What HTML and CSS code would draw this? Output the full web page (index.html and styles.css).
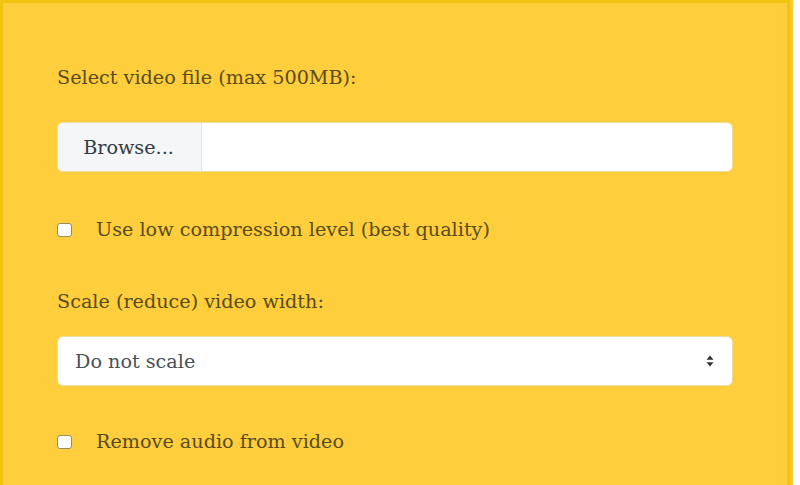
FILE: index.html
```html
<!DOCTYPE html>
<html>
<head>
<meta charset="utf-8">
<link rel="stylesheet" href="styles.css">
</head>
<body>
<div class="panel">
  <form class="form">
    <div class="field-label first">Select video file (max 500MB):</div>
    <label class="file-input">
      <span class="file-btn">Browse...</span>
      <span class="file-name"></span>
    </label>
    <label class="check-row first-check">
      <input type="checkbox" class="check">
      <span>Use low compression level (best quality)</span>
    </label>
    <div class="field-label second">Scale (reduce) video width:</div>
    <div class="select-wrap">
      <select class="select">
        <option>Do not scale</option>
      </select>
      <svg class="select-arrow" width="8" height="12" viewBox="0 0 8 12"><path d="M4 0.5 L7.5 4.8 H0.5 Z M4 11.5 L7.5 7.2 H0.5 Z" fill="#333"/></svg>
    </div>
    <label class="check-row second-check">
      <input type="checkbox" class="check">
      <span>Remove audio from video</span>
    </label>
  </form>
</div>
</body>
</html>
```

FILE: styles.css
```css
html, body {
  margin: 0;
  padding: 0;
  background: #ffffff;
  height: 100%;
  overflow: hidden;
}
.panel {
  width: 784px;
  height: 482px;
  overflow: hidden;
  background: #ffce3d;
  border: 3px solid #f2c40f;
  border-bottom: none;
  box-shadow: 3px 0 0 #f6cb2c;
  font-family: "DejaVu Serif", "Liberation Serif", serif;
  font-size: 19.2px;
  color: #5a4c1e;
}
.form {
  padding: 63px 54px 0 54px;
  display: flex;
  flex-direction: column;
}
.field-label {
  line-height: 24px;
  height: 24px;
  white-space: nowrap;
}
.field-label.first { margin-bottom: 32px; }
.field-label.second { margin-top: 48px; margin-bottom: 22px; }
.file-input {
  display: flex;
  height: 50px;
  box-sizing: border-box;
  border: 1px solid #ecdca0;
  border-radius: 6px;
  background: #ffffff;
  overflow: hidden;
}
.file-btn {
  width: 144px;
  box-sizing: border-box;
  background: #f5f6f8;
  border-right: 1px solid #dfe2e6;
  color: #343a40;
  display: flex;
  align-items: center;
  justify-content: center;
  padding-right: 2px;
}
.file-name { flex: 1; }
.check-row {
  display: flex;
  align-items: center;
  height: 24px;
  line-height: 24px;
  white-space: nowrap;
}
.first-check { margin-top: 46px; }
.second-check { margin-top: 44px; }
.check {
  appearance: none;
  -webkit-appearance: none;
  width: 15px;
  height: 14px;
  margin: 0 24px 0 0;
  background: #ffffff;
  border: 1px solid #9a8a5a;
  border-radius: 3px;
  box-sizing: border-box;
  flex: none;
}
.select-wrap {
  position: relative;
  height: 50px;
}
.select {
  appearance: none;
  -webkit-appearance: none;
  width: 100%;
  height: 50px;
  box-sizing: border-box;
  border: 1px solid #ecdca0;
  border-radius: 6px;
  background: #ffffff;
  font-family: "DejaVu Serif", "Liberation Serif", serif;
  font-size: 19.2px;
  color: #495057;
  padding: 0 17px;
  outline: none;
}
.select-arrow {
  position: absolute;
  right: 19px;
  top: 19px;
}
```
